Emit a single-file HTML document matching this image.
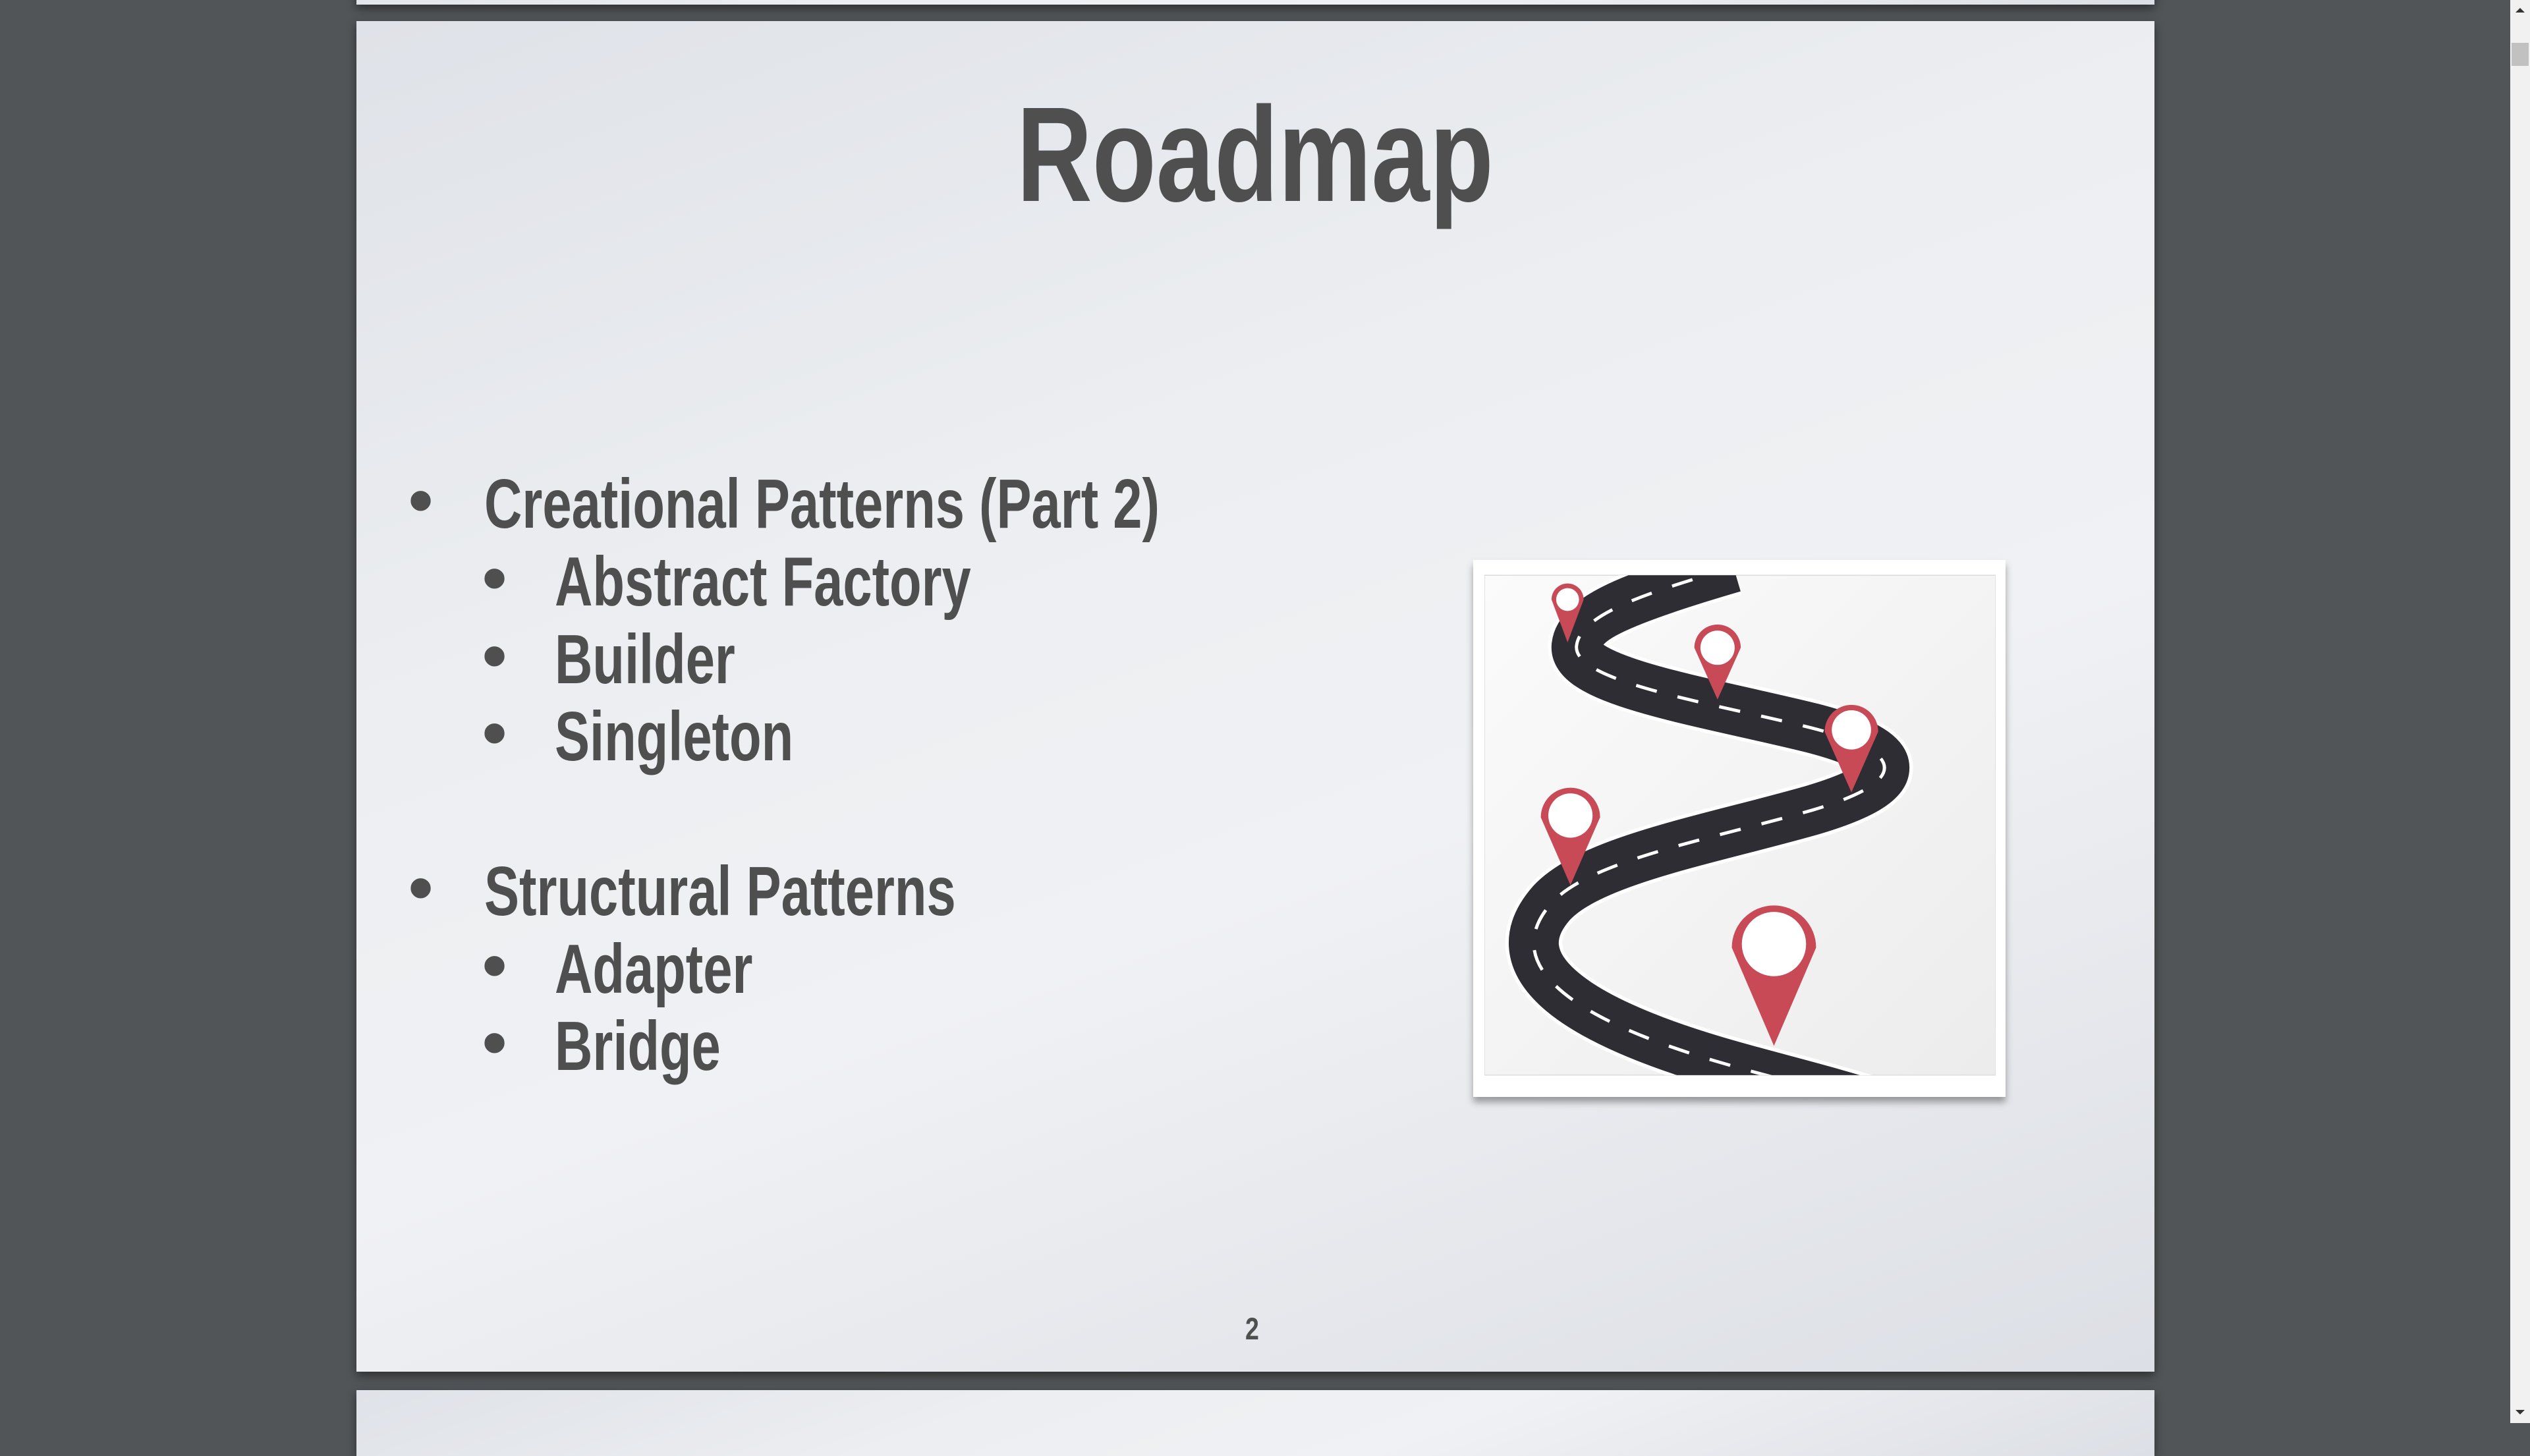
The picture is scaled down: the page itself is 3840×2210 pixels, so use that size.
<!DOCTYPE html>
<html><head><style>
html,body{margin:0;padding:0;width:3840px;height:2160px;overflow:hidden;background:#515558;font-family:"Liberation Sans",sans-serif;}
.slide{position:absolute;left:541px;width:2729px;background:linear-gradient(160deg,#dfe2e8 0%,#eceef1 35%,#f0f1f4 60%,#dcdfe5 100%);box-shadow:0 6px 14px rgba(0,0,0,.45);}
.t{position:absolute;color:#4f4f4f;font-weight:bold;white-space:nowrap;transform-origin:0 0;}
.sb{position:absolute;left:3810px;top:0;width:30px;height:2160px;background:#f1f1f1;}
</style></head><body>
<div class="slide" style="top:-100px;height:107px"></div>
<div class="slide" style="top:32px;height:2050px"></div>
<div class="slide" style="top:2110px;height:100px"></div>

<div class="t" style="left:1543px;top:120px;font-size:205px;line-height:230px;transform:scaleX(0.775)">Roadmap</div>

<div class="t" style="left:620px;top:700px;font-size:106px;line-height:118px;">•</div>
<div class="t" style="left:735px;top:706px;font-size:106px;line-height:118px;transform:scaleX(0.75)">Creational Patterns (Part 2)</div>
<div class="t" style="left:732px;top:818px;font-size:106px;line-height:118px;">•</div>
<div class="t" style="left:842px;top:824px;font-size:106px;line-height:118px;transform:scaleX(0.75)">Abstract Factory</div>
<div class="t" style="left:732px;top:936px;font-size:106px;line-height:118px;">•</div>
<div class="t" style="left:842px;top:942px;font-size:106px;line-height:118px;transform:scaleX(0.75)">Builder</div>
<div class="t" style="left:732px;top:1053px;font-size:106px;line-height:118px;">•</div>
<div class="t" style="left:842px;top:1059px;font-size:106px;line-height:118px;transform:scaleX(0.75)">Singleton</div>
<div class="t" style="left:620px;top:1288px;font-size:106px;line-height:118px;">•</div>
<div class="t" style="left:735px;top:1294px;font-size:106px;line-height:118px;transform:scaleX(0.75)">Structural Patterns</div>
<div class="t" style="left:732px;top:1406px;font-size:106px;line-height:118px;">•</div>
<div class="t" style="left:842px;top:1412px;font-size:106px;line-height:118px;transform:scaleX(0.75)">Adapter</div>
<div class="t" style="left:732px;top:1523px;font-size:106px;line-height:118px;">•</div>
<div class="t" style="left:842px;top:1529px;font-size:106px;line-height:118px;transform:scaleX(0.75)">Bridge</div>

<div class="t" style="left:1890px;top:1990px;font-size:47px;line-height:54px;transform:scaleX(0.8)">2</div>

<div style="position:absolute;left:2236px;top:850px;width:808px;height:815px;background:#fff;box-shadow:0 8px 10px rgba(0,0,0,.35);"></div>
<svg style="position:absolute;left:2253px;top:864px" width="776" height="777" viewBox="62 62 1432 1400">
<defs><linearGradient id="bg" x1="0" y1="0" x2="1" y2="1"><stop offset="0" stop-color="#fbfbfb"/><stop offset="1" stop-color="#ececec"/></linearGradient>
<clipPath id="c"><rect x="62" y="62" width="1432" height="1400"/></clipPath></defs>
<rect x="62" y="62" width="1432" height="1400" fill="url(#bg)" stroke="#ddd" stroke-width="3"/>
<g fill="none" clip-path="url(#c)">
<path d="M760 40 C520 110 330 170 320 260 C310 360 700 420 980 490 C1250 560 1250 640 980 720 C700 800 360 860 250 980 C100 1150 300 1300 700 1420 C900 1480 1100 1520 1300 1600" stroke="#fff" stroke-width="160"/>
<path d="M760 40 C520 110 330 170 320 260 C310 360 700 420 980 490 C1250 560 1250 640 980 720 C700 800 360 860 250 980 C100 1150 300 1300 700 1420 C900 1480 1100 1520 1300 1600" stroke="#2f2d34" stroke-width="140"/>
<path d="M760 40 C520 110 330 170 320 260 C310 360 700 420 980 490 C1250 560 1250 640 980 720 C700 800 360 860 250 980 C100 1150 300 1300 700 1420 C900 1480 1100 1520 1300 1600" stroke="#fff" stroke-width="9" stroke-dasharray="60 60"/>
</g>
<g fill="#c84a56">
<path d="M250 130 A45 45 0 1 1 340 130 L295 250 Z"/>
<path d="M650 265 A65 65 0 1 1 780 265 L715 410 Z"/>
<path d="M1015 500 A75 75 0 1 1 1165 500 L1090 670 Z"/>
<path d="M220 740 A83 83 0 1 1 386 740 L303 930 Z"/>
<path d="M755 1105 A118 118 0 1 1 991 1105 L873 1380 Z"/>
</g>
<g fill="#fff">
<circle cx="295" cy="130" r="32"/><circle cx="715" cy="265" r="48"/><circle cx="1090" cy="495" r="55"/><circle cx="303" cy="735" r="62"/><circle cx="873" cy="1095" r="90"/>
</g>
</svg>

<div class="sb"><div style="position:absolute;left:8px;top:12px;width:0;height:0;border-left:7px solid transparent;border-right:7px solid transparent;border-bottom:7px solid #333"></div>
<div style="position:absolute;left:2px;top:65px;width:26px;height:35px;background:#c1c1c1"></div>
<div style="position:absolute;left:8px;top:2140px;width:0;height:0;border-left:7px solid transparent;border-right:7px solid transparent;border-top:7px solid #333"></div></div>
</body></html>
